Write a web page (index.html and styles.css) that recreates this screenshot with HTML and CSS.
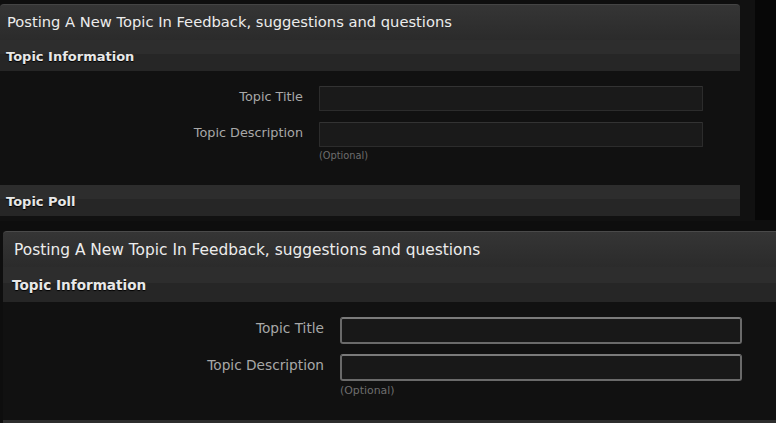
FILE: index.html
```html
<!DOCTYPE html>
<html>
<head>
<meta charset="utf-8">
<link rel="stylesheet" href="styles.css">
</head>
<body>
<div class="shot shot-top">
  <div class="panel">
    <div class="maintitle">Posting A New Topic In Feedback, suggestions and questions</div>
    <div class="subhead">Topic Information</div>
    <div class="form">
      <div class="row">
        <div class="label">Topic Title</div>
        <div class="field"><div class="input"></div></div>
      </div>
      <div class="row">
        <div class="label">Topic Description</div>
        <div class="field"><div class="input"></div><div class="hint">(Optional)</div></div>
      </div>
    </div>
    <div class="subhead">Topic Poll</div>
  </div>
  <div class="gutter"></div>
  <div class="strip"></div>
</div>
<div class="shot shot-bottom">
  <div class="panel">
    <div class="maintitle">Posting A New Topic In Feedback, suggestions and questions</div>
    <div class="subhead">Topic Information</div>
    <div class="form">
      <div class="row">
        <div class="label">Topic Title</div>
        <div class="field"><div class="input"></div></div>
      </div>
      <div class="row">
        <div class="label">Topic Description</div>
        <div class="field"><div class="input"></div><div class="hint">(Optional)</div></div>
      </div>
    </div>
    <div class="subhead"></div>
  </div>
</div>
</body>
</html>
```

FILE: styles.css
```css
html, body {
  margin: 0;
  padding: 0;
  background: #0e0e0e;
  overflow: hidden;
  width: 776px;
  height: 423px;
  font-family: "DejaVu Sans", Verdana, sans-serif;
}

.shot {
  display: flex;
  overflow: hidden;
}

.shot-top {
  height: 221px;
  padding-top: 4px;
  box-sizing: border-box;
}

.shot-top .panel {
  width: 740px;
  flex: none;
  background: #111;
}

.gutter {
  width: 15px;
  flex: none;
  margin-top: -4px;
  background: #111;
}

.strip {
  flex: 1;
  margin-top: -4px;
  margin-bottom: 1px;
  background: #070707;
}

.panel {
  display: flex;
  flex-direction: column;
}

.panel > * {
  flex: none;
}

.maintitle {
  height: 36px;
  box-sizing: border-box;
  border-top: 1px solid #444;
  border-radius: 4px 4px 0 0;
  background: linear-gradient(#353535, #2b2b2b);
  color: #ececec;
  font-size: 14.7px;
  line-height: 34px;
  padding-left: 7px;
  white-space: nowrap;
}

.subhead {
  height: 31px;
  box-sizing: border-box;
  background: linear-gradient(#2d2d2d 0, #2d2d2d 45%, #262626 45%, #262626 100%);
  color: #e8e8e8;
  font-weight: bold;
  font-size: 13px;
  line-height: 31px;
  padding-top: 1px;
  padding-left: 6px;
  text-shadow: 0 1px 1px #000;
}

.form {
  background: #111;
  padding-top: 15px;
  height: 114px;
  box-sizing: border-box;
  display: flex;
  flex-direction: column;
  gap: 11px;
}

.row {
  display: flex;
  gap: 16px;
}

.label {
  width: 303px;
  flex: none;
  text-align: right;
  color: #a8a8a8;
  font-size: 12.8px;
  line-height: 22px;
}

.field {
  display: flex;
  flex-direction: column;
}

.input {
  width: 384px;
  height: 25px;
  box-sizing: border-box;
  border: 1px solid #2c2c2c;
  border-top-color: #333;
  background: #1a1a1a;
  border-radius: 1px;
}

.hint {
  color: #6e6e6e;
  font-size: 9.8px;
  line-height: 14px;
  margin-top: 2px;
}

/* bottom, larger shot */
.shot-bottom {
  padding-top: 10px;
  padding-left: 3px;
  height: 202px;
  box-sizing: border-box;
}

.shot-bottom .panel {
  width: 800px;
  flex: none;
  background: #111;
}

.shot-bottom .maintitle {
  height: 36px;
  font-size: 15.4px;
  line-height: 36px;
  padding-left: 11px;
  border-top-color: #4a4a4a;
}

.shot-bottom .subhead {
  height: 35px;
  font-size: 13.6px;
  line-height: 35px;
  padding-left: 9px;
}

.shot-bottom .form {
  height: 118px;
  padding-top: 15px;
  gap: 10px;
}

.shot-bottom .label {
  width: 321px;
  font-size: 13.7px;
  line-height: 23px;
}

.shot-bottom .input {
  width: 402px;
  height: 27px;
  border: 2px solid #6a6a6a;
  border-top-color: #7a7a7a;
  border-radius: 3px;
  background: #181818;
}

.shot-bottom .hint {
  font-size: 10.9px;
  line-height: 14px;
  margin-top: 3px;
}
```
